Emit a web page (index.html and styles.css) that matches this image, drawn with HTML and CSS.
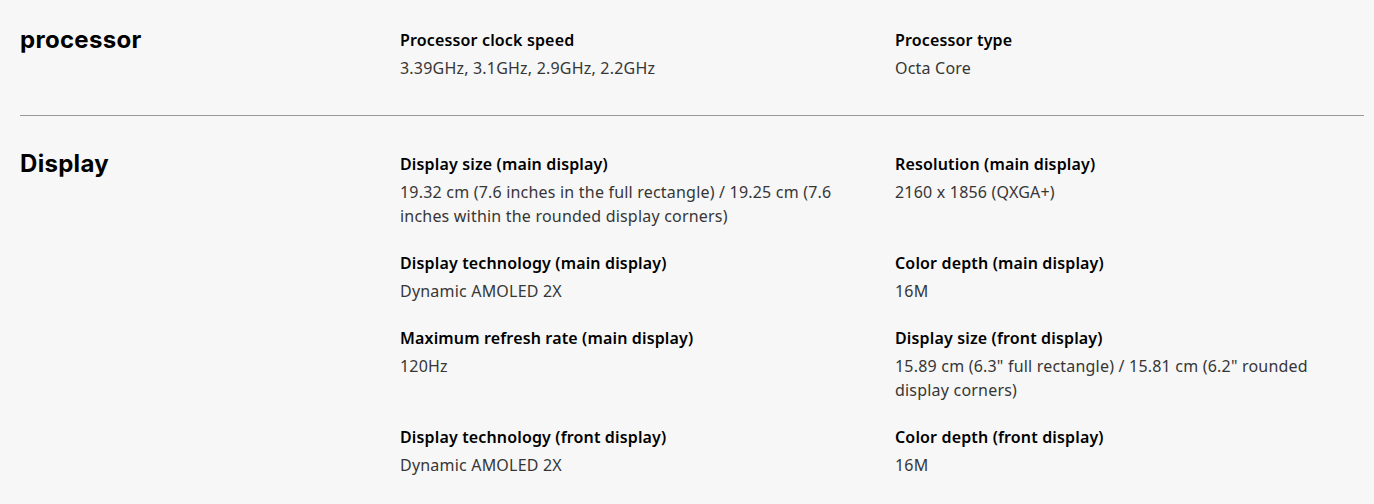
FILE: index.html
```html
<!DOCTYPE html>
<html>
<head>
<meta charset="utf-8">
<link rel="stylesheet" href="styles.css">
</head>
<body>
<div class="specs">
  <section class="spec-group first">
    <h2 class="group-title">processor</h2>
    <div class="items">
      <div class="item"><div class="label">Processor clock speed</div><div class="value">3.39GHz, 3.1GHz, 2.9GHz, 2.2GHz</div></div>
      <div class="item"><div class="label">Processor type</div><div class="value">Octa Core</div></div>
    </div>
  </section>
  <section class="spec-group">
    <h2 class="group-title">Display</h2>
    <div class="items">
      <div class="item"><div class="label">Display size (main display)</div><div class="value">19.32 cm (7.6 inches in the full rectangle) / 19.25 cm (7.6 inches within the rounded display corners)</div></div>
      <div class="item"><div class="label">Resolution (main display)</div><div class="value">2160 x 1856 (QXGA+)</div></div>
      <div class="item"><div class="label">Display technology (main display)</div><div class="value">Dynamic AMOLED 2X</div></div>
      <div class="item"><div class="label">Color depth (main display)</div><div class="value">16M</div></div>
      <div class="item"><div class="label">Maximum refresh rate (main display)</div><div class="value">120Hz</div></div>
      <div class="item"><div class="label">Display size (front display)</div><div class="value">15.89 cm (6.3" full rectangle) / 15.81 cm (6.2" rounded display corners)</div></div>
      <div class="item"><div class="label">Display technology (front display)</div><div class="value">Dynamic AMOLED 2X</div></div>
      <div class="item"><div class="label">Color depth (front display)</div><div class="value">16M</div></div>
    </div>
  </section>
</div>
</body>
</html>
```
FILE: styles.css
```css
html, body {
  margin: 0;
  padding: 0;
  background: #f7f7f7;
}
body {
  font-family: "Noto Sans", sans-serif;
  color: #000;
}
.specs {
  padding: 0 10px 0 20px;
}
.spec-group {
  display: grid;
  grid-template-columns: 380px 1fr;
  padding: 36px 0 35px;
  border-bottom: 1px solid #999;
}
.spec-group.first {
  padding-top: 28px;
}
.spec-group:last-child {
  border-bottom: none;
}
.group-title {
  margin: 0;
  font-family: "Inter", sans-serif;
  font-weight: 700;
  font-size: 24px;
  line-height: 24px;
  letter-spacing: 0.3px;
}
.items {
  display: grid;
  grid-template-columns: 1fr 1fr;
  column-gap: 26px;
  row-gap: 23px;
}
.label {
  font-weight: 600;
  font-size: 16px;
  line-height: 24px;
  letter-spacing: 0.15px;
  margin-bottom: 4px;
}
.value {
  font-size: 16px;
  line-height: 24px;
  color: #363636;
  letter-spacing: 0.2px;
}
```
